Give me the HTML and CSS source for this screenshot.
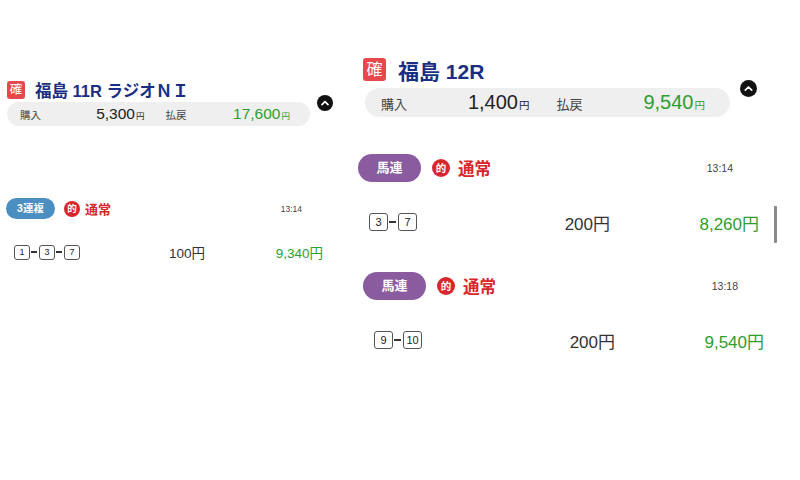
FILE: index.html
```html
<!DOCTYPE html>
<html lang="ja">
<head>
  <meta charset="UTF-8" />
  <meta name="viewport" content="width=device-width, initial-scale=1.0" />
  <title>購入履歴</title>
  <link rel="stylesheet" href="styles.css">
</head>
<body>
  <div class="page">
    <!-- 福島 11R -->
    <section class="panel panel-sm">
      <div class="race-head">
        <span class="fix-badge">確</span>
        <h2 class="race-title">福島 11R ラジオＮＩ</h2>
      </div>
      <div class="summary">
        <div class="summary-pill">
          <div class="cell"><span class="label">購入</span><span class="amount">5,300<small>円</small></span></div>
          <div class="cell"><span class="label">払戻</span><span class="amount win">17,600<small>円</small></span></div>
        </div>
        <button class="toggle" aria-label="閉じる">
          <svg viewBox="0 0 16 16"><circle cx="8" cy="8" r="8" fill="#111"/><polyline points="5,9.6 8,6.6 11,9.6" fill="none" stroke="#fff" stroke-width="1.7" stroke-linecap="round" stroke-linejoin="round"/></svg>
        </button>
      </div>

      <div class="entry">
        <div class="entry-head">
          <span class="bet-type trio">3連複</span>
          <span class="hit">的</span>
          <span class="mode">通常</span>
          <span class="time">13:14</span>
        </div>
        <div class="entry-row">
          <div class="nums"><span class="num">1</span><span class="dash"></span><span class="num">3</span><span class="dash"></span><span class="num">7</span></div>
          <span class="stake">100円</span>
          <span class="payout">9,340円</span>
        </div>
      </div>
    </section>

    <!-- 福島 12R -->
    <section class="panel">
      <div class="race-head">
        <span class="fix-badge">確</span>
        <h2 class="race-title">福島 12R</h2>
      </div>
      <div class="summary">
        <div class="summary-pill">
          <div class="cell"><span class="label">購入</span><span class="amount">1,400<small>円</small></span></div>
          <div class="cell"><span class="label">払戻</span><span class="amount win">9,540<small>円</small></span></div>
        </div>
        <button class="toggle" aria-label="閉じる">
          <svg viewBox="0 0 16 16"><circle cx="8" cy="8" r="8" fill="#111"/><polyline points="5,9.6 8,6.6 11,9.6" fill="none" stroke="#fff" stroke-width="1.6" stroke-linecap="round" stroke-linejoin="round"/></svg>
        </button>
      </div>

      <div class="entry shift">
        <div class="entry-head">
          <span class="bet-type quinella">馬連</span>
          <span class="hit">的</span>
          <span class="mode">通常</span>
          <span class="time">13:14</span>
        </div>
        <div class="entry-row">
          <div class="nums"><span class="num">3</span><span class="dash"></span><span class="num">7</span></div>
          <span class="stake">200円</span>
          <span class="payout">8,260円</span>
        </div>
      </div>

      <div class="entry">
        <div class="entry-head">
          <span class="bet-type quinella">馬連</span>
          <span class="hit">的</span>
          <span class="mode">通常</span>
          <span class="time">13:18</span>
        </div>
        <div class="entry-row">
          <div class="nums"><span class="num">9</span><span class="dash"></span><span class="num">10</span></div>
          <span class="stake">200円</span>
          <span class="payout">9,540円</span>
        </div>
      </div>

      <div class="scrollbar"></div>
    </section>
  </div>
</body>
</html>
```

FILE: styles.css
```css
* {
  box-sizing: border-box;
}
body {
  margin: 0;
  background: #fff;
  color: #333;
  font-family: "Liberation Sans", "Noto Sans CJK JP", sans-serif;
}
.page {
  display: flex;
  align-items: flex-start;
  height: 480px;
  overflow: hidden;
}

/* panel (large = right, panel-sm = left) */
.panel {
  position: relative;
  width: 415px;
  margin-left: 29px;
  padding-top: 58px;
  height: 480px;
}
.panel-sm {
  width: 327px;
  margin-left: 7px;
  padding-top: 81px;
}

.race-head {
  display: flex;
  align-items: center;
  gap: 12px;
  height: 23px;
}
.fix-badge {
  width: 23px;
  height: 23px;
  border-radius: 3px;
  background: #e8484b;
  color: #fff;
  font-size: 16px;
  line-height: 23px;
  text-align: center;
}
.race-title {
  margin: 0;
  font-size: 21px;
  font-weight: bold;
  color: #1a2e84;
  white-space: nowrap;
}
.panel-sm .race-head {
  gap: 10px;
  height: 18px;
}
.panel-sm .fix-badge {
  width: 18px;
  height: 18px;
  font-size: 12.5px;
  line-height: 18px;
}
.panel-sm .race-title {
  font-size: 16.5px;
}

/* purchase / payout summary */
.summary {
  display: flex;
  align-items: flex-start;
  margin-top: 7px;
  margin-left: 2px;
}
.summary-pill {
  display: grid;
  grid-template-columns: 1fr 1fr;
  column-gap: 27px;
  align-items: center;
  width: 365px;
  height: 29px;
  padding: 0 25px 0 16px;
  background: #efefef;
  border-radius: 15px;
}
.cell {
  display: flex;
  justify-content: space-between;
  align-items: baseline;
}
.label {
  font-size: 13px;
  color: #444;
}
.amount {
  font-size: 20px;
  color: #222;
}
.amount small {
  font-size: 10.5px;
  margin-left: 1px;
}
.amount.win {
  color: #2e9e2e;
}
.toggle {
  width: 17px;
  height: 17px;
  margin: -8px 0 0 10px;
  padding: 0;
  border: none;
  background: none;
}
.toggle svg {
  display: block;
  width: 100%;
  height: 100%;
}
.panel-sm .summary {
  margin-top: 3px;
  margin-left: 0;
}
.panel-sm .summary-pill {
  width: 303px;
  height: 24px;
  padding: 0 20px 0 13px;
  column-gap: 21px;
  border-radius: 12px;
}
.panel-sm .label {
  font-size: 10.5px;
}
.panel-sm .amount {
  font-size: 15.5px;
}
.panel-sm .amount small {
  font-size: 8.5px;
}
.panel-sm .toggle {
  width: 16px;
  height: 16px;
  margin: -7px 0 0 7px;
}

/* bet entries */
.entry {
  width: 401px;
  margin-top: 35px;
}
.entry.shift {
  margin-top: 37px;
  margin-left: -5px;
}
.entry-head {
  display: flex;
  align-items: center;
  height: 28px;
}
.bet-type {
  width: 63px;
  height: 28px;
  border-radius: 14px;
  color: #fff;
  font-size: 13px;
  font-weight: bold;
  line-height: 28px;
  text-align: center;
}
.bet-type.quinella {
  background: #8a5b9e;
}
.bet-type.trio {
  background: #4b8fc0;
}
.hit {
  width: 18px;
  height: 18px;
  margin-left: 11px;
  border-radius: 50%;
  background: #d8262c;
  color: #fff;
  font-size: 10.5px;
  font-weight: bold;
  line-height: 18px;
  text-align: center;
}
.mode {
  margin-left: 8px;
  font-size: 16.5px;
  font-weight: bold;
  color: #d8262c;
}
.time {
  margin-left: auto;
  margin-right: 26px;
  font-size: 10.5px;
  color: #444;
}
.entry-row {
  display: grid;
  grid-template-columns: 1fr 100px 149px;
  align-items: center;
  height: 30px;
  margin-top: 25px;
  padding-left: 11px;
}
.nums {
  display: flex;
  align-items: center;
}
.num {
  width: 19px;
  height: 18px;
  border: 1.3px solid #555;
  border-radius: 3px;
  font-size: 11px;
  line-height: 16px;
  text-align: center;
  color: #222;
}
.dash {
  width: 7px;
  height: 2.5px;
  margin: 0 2px 0 1px;
  background: #333;
}
.stake {
  text-align: right;
  font-size: 17px;
  color: #333;
}
.payout {
  text-align: right;
  font-size: 17px;
  color: #2e9e2e;
}

.panel-sm .entry {
  width: 317px;
  margin-top: 72px;
  margin-left: -1px;
}
.panel-sm .entry-head {
  height: 21px;
}
.panel-sm .bet-type {
  width: 49px;
  height: 21px;
  border-radius: 11px;
  font-size: 10.5px;
  line-height: 21px;
}
.panel-sm .hit {
  width: 16px;
  height: 16px;
  margin-left: 9px;
  font-size: 9.5px;
  line-height: 16px;
}
.panel-sm .mode {
  margin-left: 5px;
  font-size: 13px;
}
.panel-sm .time {
  margin-right: 21px;
  font-size: 8.5px;
}
.panel-sm .entry-row {
  grid-template-columns: 1fr 80px 118px;
  height: 24px;
  margin-top: 21px;
  padding-left: 8px;
}
.panel-sm .num {
  width: 16px;
  height: 15px;
  border-width: 1.1px;
  font-size: 9px;
  line-height: 13px;
}
.panel-sm .dash {
  width: 6px;
  height: 2px;
  margin: 0 2px 0 1px;
}
.panel-sm .stake,
.panel-sm .payout {
  font-size: 13.5px;
}

/* overlay scrollbar */
.scrollbar {
  position: absolute;
  top: 206px;
  left: 411px;
  width: 3px;
  height: 37px;
  background: #8a8a8a;
  border-radius: 1px;
}
```
